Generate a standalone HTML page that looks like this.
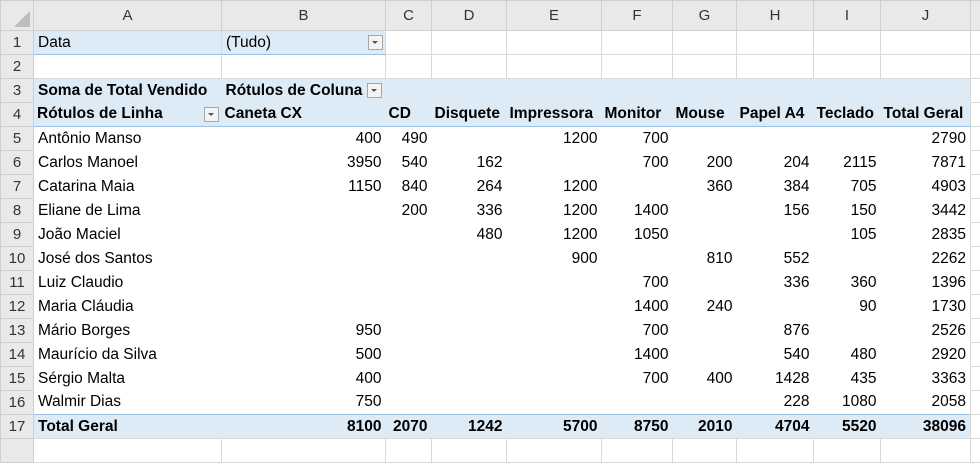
<!DOCTYPE html>
<html><head><meta charset="utf-8"><style>
body{margin:0;width:980px;height:441px;overflow:hidden;background:#fff;font-family:"Liberation Sans",Arial,sans-serif;font-size:15.5px;color:#000}
table{border-collapse:collapse;table-layout:fixed;position:absolute;left:0;top:0;width:1010px}
td{height:24px;padding:0 4px;border:1px solid #d9d9d9;white-space:nowrap;overflow:hidden;box-sizing:border-box}
tr.h td{height:30px;background:#e9e9e9;color:#333;text-align:center;border-color:#cfcfcf;font-size:15px}
td.rh{background:#e9e9e9;color:#333;text-align:center;border-color:#cfcfcf;padding:0;font-size:15px}
.p{border:none;background:#fff;text-align:right}
.b{background:#ddebf7}
.bb{font-weight:bold}
.l{text-align:left}
tr.r4 td.p{border-bottom:1px solid #9bc2e6;text-align:left;padding-left:3px}
tr.r17 td.p{border-top:1px solid #9bc2e6;font-weight:bold}
.dd{position:absolute;width:15px;height:15px;border:1px solid #a6a6a6;background:#f4f4f4;box-sizing:border-box}
.dd:after{content:"";position:absolute;left:3px;top:5px;border-left:3px solid transparent;border-right:3px solid transparent;border-top:3px solid #555}
</style></head><body>
<table>
<colgroup><col style="width:33px"><col style="width:188px"><col style="width:164px"><col style="width:46px"><col style="width:75px"><col style="width:95px"><col style="width:71px"><col style="width:64px"><col style="width:77px"><col style="width:67px"><col style="width:90px"><col style="width:40px"></colgroup>
<tr class="h"><td style="position:relative"><div style="position:absolute;right:3px;bottom:3px;border-left:16px solid transparent;border-bottom:16px solid #bdbdbd"></div></td><td>A</td><td>B</td><td>C</td><td>D</td><td>E</td><td>F</td><td>G</td><td>H</td><td>I</td><td>J</td><td></td></tr>
<tr><td class="rh">1</td><td class="b l" style="border-color:#ddebf7 #d9d9d9 #9bc2e6 #d9d9d9">Data</td><td class="b l" style="border-bottom-color:#9bc2e6">(Tudo)</td><td></td><td></td><td></td><td></td><td></td><td></td><td></td><td></td><td></td></tr>
<tr><td class="rh">2</td><td></td><td></td><td></td><td></td><td></td><td></td><td></td><td></td><td></td><td></td><td></td></tr>
<tr><td class="rh">3</td><td class="p b bb l">Soma de Total Vendido</td><td class="p b bb l">Rótulos de Coluna</td><td class="p b"></td><td class="p b"></td><td class="p b"></td><td class="p b"></td><td class="p b"></td><td class="p b"></td><td class="p b"></td><td class="p b"></td><td></td></tr>
<tr class="r4"><td class="rh">4</td><td class="p b bb">Rótulos de Linha</td><td class="p b bb">Caneta CX</td><td class="p b bb">CD</td><td class="p b bb">Disquete</td><td class="p b bb">Impressora</td><td class="p b bb">Monitor</td><td class="p b bb">Mouse</td><td class="p b bb">Papel A4</td><td class="p b bb">Teclado</td><td class="p b bb">Total Geral</td><td></td></tr>
<tr><td class="rh">5</td><td class="p l">Antônio Manso</td><td class="p">400</td><td class="p">490</td><td class="p"></td><td class="p">1200</td><td class="p">700</td><td class="p"></td><td class="p"></td><td class="p"></td><td class="p">2790</td><td></td></tr>
<tr><td class="rh">6</td><td class="p l">Carlos Manoel</td><td class="p">3950</td><td class="p">540</td><td class="p">162</td><td class="p"></td><td class="p">700</td><td class="p">200</td><td class="p">204</td><td class="p">2115</td><td class="p">7871</td><td></td></tr>
<tr><td class="rh">7</td><td class="p l">Catarina Maia</td><td class="p">1150</td><td class="p">840</td><td class="p">264</td><td class="p">1200</td><td class="p"></td><td class="p">360</td><td class="p">384</td><td class="p">705</td><td class="p">4903</td><td></td></tr>
<tr><td class="rh">8</td><td class="p l">Eliane de Lima</td><td class="p"></td><td class="p">200</td><td class="p">336</td><td class="p">1200</td><td class="p">1400</td><td class="p"></td><td class="p">156</td><td class="p">150</td><td class="p">3442</td><td></td></tr>
<tr><td class="rh">9</td><td class="p l">João Maciel</td><td class="p"></td><td class="p"></td><td class="p">480</td><td class="p">1200</td><td class="p">1050</td><td class="p"></td><td class="p"></td><td class="p">105</td><td class="p">2835</td><td></td></tr>
<tr><td class="rh">10</td><td class="p l">José dos Santos</td><td class="p"></td><td class="p"></td><td class="p"></td><td class="p">900</td><td class="p"></td><td class="p">810</td><td class="p">552</td><td class="p"></td><td class="p">2262</td><td></td></tr>
<tr><td class="rh">11</td><td class="p l">Luiz Claudio</td><td class="p"></td><td class="p"></td><td class="p"></td><td class="p"></td><td class="p">700</td><td class="p"></td><td class="p">336</td><td class="p">360</td><td class="p">1396</td><td></td></tr>
<tr><td class="rh">12</td><td class="p l">Maria Cláudia</td><td class="p"></td><td class="p"></td><td class="p"></td><td class="p"></td><td class="p">1400</td><td class="p">240</td><td class="p"></td><td class="p">90</td><td class="p">1730</td><td></td></tr>
<tr><td class="rh">13</td><td class="p l">Mário Borges</td><td class="p">950</td><td class="p"></td><td class="p"></td><td class="p"></td><td class="p">700</td><td class="p"></td><td class="p">876</td><td class="p"></td><td class="p">2526</td><td></td></tr>
<tr><td class="rh">14</td><td class="p l">Maurício da Silva</td><td class="p">500</td><td class="p"></td><td class="p"></td><td class="p"></td><td class="p">1400</td><td class="p"></td><td class="p">540</td><td class="p">480</td><td class="p">2920</td><td></td></tr>
<tr><td class="rh">15</td><td class="p l">Sérgio Malta</td><td class="p">400</td><td class="p"></td><td class="p"></td><td class="p"></td><td class="p">700</td><td class="p">400</td><td class="p">1428</td><td class="p">435</td><td class="p">3363</td><td></td></tr>
<tr><td class="rh">16</td><td class="p l">Walmir Dias</td><td class="p">750</td><td class="p"></td><td class="p"></td><td class="p"></td><td class="p"></td><td class="p"></td><td class="p">228</td><td class="p">1080</td><td class="p">2058</td><td></td></tr>
<tr class="r17"><td class="rh">17</td><td class="p b l">Total Geral</td><td class="p b">8100</td><td class="p b">2070</td><td class="p b">1242</td><td class="p b">5700</td><td class="p b">8750</td><td class="p b">2010</td><td class="p b">4704</td><td class="p b">5520</td><td class="p b">38096</td><td></td></tr>
<tr><td class="rh"></td><td></td><td></td><td></td><td></td><td></td><td></td><td></td><td></td><td></td><td></td><td></td></tr>
</table>
<div class="dd" style="left:368px;top:35px"></div>
<div class="dd" style="left:367px;top:83px"></div>
<div class="dd" style="left:204px;top:107px"></div>
</body></html>
